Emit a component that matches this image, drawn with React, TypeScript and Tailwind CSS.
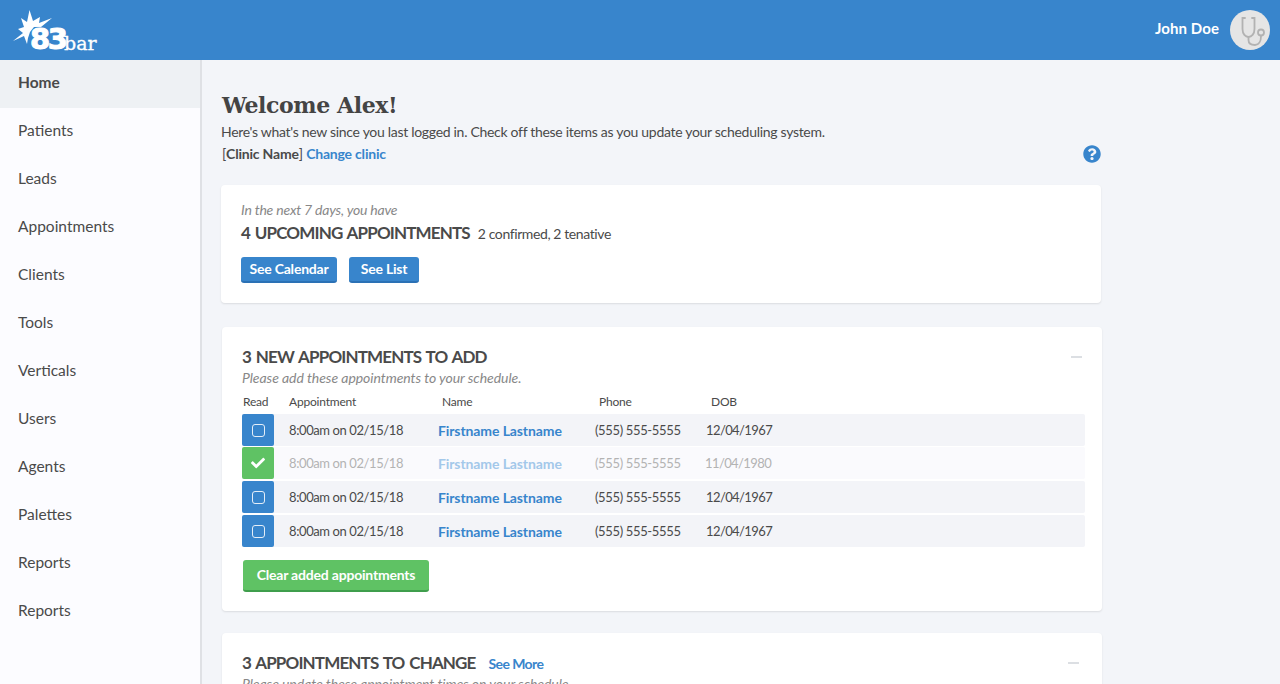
import { FaCheck, FaQuestionCircle } from "react-icons/fa";

const nav = ["Home", "Patients", "Leads", "Appointments", "Clients", "Tools", "Verticals", "Users", "Agents", "Palettes", "Reports", "Reports"];
const font = { fontFamily: "Lato, 'Noto Sans', sans-serif" };

function Row({ done, mt, dob }: { done?: boolean; mt: string; dob: string }) {
  return (
    <div className={`flex h-[32px] items-center rounded-[2px] text-[13px] ${mt} ${done ? "bg-[#fafafd] text-[#b3b3b3]" : "bg-[#f3f4f8] text-[#4a4a4a]"}`}>
      <div className={`flex h-full w-[32px] shrink-0 items-center justify-center rounded-[2px] ${done ? "bg-[#5fc264]" : "bg-[#3885cc]"}`}>
        {done ? <FaCheck className="text-[14px] text-white" /> : <div className="h-[13px] w-[13px] rounded-[3px] border-[1.5px] border-[#e4eef8]" />}
      </div>
      <div className="mt-[1px] w-[164px] shrink-0 pl-[15px] tracking-[-0.4px]">8:00am on 02/15/18</div>
      <div className={`w-[157px] shrink-0 text-[14px] font-bold tracking-[-0.1px] ${done ? "text-[#a3c8ea]" : "text-[#3885cc]"}`}>Firstname Lastname</div>
      <div className="mt-[1px] w-[111px] shrink-0 tracking-[-0.35px]">(555) 555-5555</div>
      <div className={`tracking-[-0.6px] ${done ? "ml-[-1px] mt-[2px]" : "mt-[2px]"}`}>{dob}</div>
    </div>
  );
}

export default function App() {
  return (
    <div className="flex h-[684px] w-[1280px] flex-col overflow-hidden bg-[#f3f5f9] text-[#4a4a4a]" style={font}>
      <header className="flex h-[60px] shrink-0 items-center justify-between bg-[#3885cc] pr-[10px]">
        <div className="relative h-[60px] w-[110px]">
          <svg className="absolute left-0 top-0" width="60" height="50" viewBox="0 0 60 50">
            <path fill="#fff" d="M29.5 10 L33 21 L40 17 L39 23 L52 18 L41 27 L34 27 L30 32 L28 38 L27 44 L24 36 L13 41 L23 33 L18 29 L24 27 L21 18 L27 22 Z" />
          </svg>
          <div className="absolute left-[30px] top-[21px] text-[29px] font-bold leading-[36px] tracking-[-2.5px] text-white [-webkit-text-stroke:1px_white] [font-family:'DejaVu_Sans',sans-serif] [text-shadow:0_0_2px_#3885cc]">83</div>
          <div className="absolute left-[64px] top-[31px] text-[19px] leading-[24px] text-white [-webkit-text-stroke:0.3px_white] [font-family:'DejaVu_Serif',serif]">bar</div>
        </div>
        <div className="flex items-center gap-[11px]">
          <span className="mb-[3px] text-[15px] font-bold tracking-[0.1px] text-white">John Doe</span>
          <div className="h-[40px] w-[40px] rounded-full bg-[#e5e5e5]">
            <svg width="40" height="40" viewBox="0 0 40 40" fill="none" stroke="#b2b2b2" strokeWidth="1.8" strokeLinecap="round">
              <path d="M15 8 H12.5 V19 C12.5 24 15.5 27 18.5 27 C21.5 27 24.5 24 24.5 19 V8 H22" />
              <path d="M18.5 27 V30 C18.5 33 21 35 25 35 C29 35 31 31 31 26" />
              <circle cx="31" cy="22.5" r="3" />
            </svg>
          </div>
        </div>
      </header>
      <div className="flex min-h-0 flex-1">
        <aside className="w-[202px] shrink-0 border-r-2 border-[#dfe1e5] bg-[#fcfcff]">
          {nav.map((n, i) => (
            <div key={i} className={`flex h-[48px] items-center pb-[2px] pl-[18px] text-[15.5px] ${i === 0 ? "bg-[#eef1f4] font-bold" : ""}`}>{n}</div>
          ))}
        </aside>
        <main className="w-[900px] pl-[19px] pt-[30px]">
          <h1 className="pl-[1px] text-[22px] font-bold leading-[30px] tracking-[-0.4px] text-[#444] [font-family:'DejaVu_Serif',serif]">Welcome Alex!</h1>
          <p className="mt-[2px] text-[14px] leading-[20px] tracking-[-0.3px]">Here's what's new since you last logged in. Check off these items as you update your scheduling system.</p>
          <div className="relative mt-[1px] flex h-[20px] w-[880px] items-center justify-between pl-[1px] text-[14px] tracking-[-0.2px]">
            <div>[<b>Clinic Name</b>] <b className="text-[#3885cc]">Change clinic</b></div>
            <FaQuestionCircle className="mt-[1px] text-[18px] text-[#3885cc]" />
          </div>

          <section className="mt-[22px] h-[118px] w-[880px] rounded-[4px] bg-white pl-[20px] pt-[16px] shadow-[0_1px_2px_rgba(0,0,0,0.1)]">
            <div className="text-[14px] italic leading-[18px] tracking-[-0.2px] text-[#888]">In the next 7 days, you have</div>
            <div className="mt-[2px] flex h-[24px] items-center">
              <span className="text-[17px] font-bold tracking-[-0.85px] [word-spacing:1.5px]">4 UPCOMING APPOINTMENTS</span>
              <span className="ml-[8px] text-[14px] tracking-[-0.4px]">2 confirmed, 2 tenative</span>
            </div>
            <div className="mt-[12px] flex gap-[12px]">
              <button className="h-[26px] w-[96px] rounded-[3px] border-b-2 border-[#2b71b5] bg-[#3885cc] pb-[1px] text-[14px] font-bold tracking-[-0.2px] text-white">See Calendar</button>
              <button className="h-[26px] w-[70px] rounded-[3px] border-b-2 border-[#2b71b5] bg-[#3885cc] pb-[1px] text-[14px] font-bold tracking-[-0.2px] text-white">See List</button>
            </div>
          </section>

          <section className="ml-[1px] mt-[24px] h-[284px] w-[880px] rounded-[4px] bg-white pl-[20px] pr-[17px] pt-[19px] shadow-[0_1px_2px_rgba(0,0,0,0.1)]">
            <div className="flex h-[22px] items-center justify-between pr-[3px]">
              <span className="text-[17px] font-bold tracking-[-0.85px] [word-spacing:1.5px]">3 NEW APPOINTMENTS TO ADD</span>
              <span className="h-[2px] w-[11px] bg-[#dcdfe3]" />
            </div>
            <div className="text-[14px] italic leading-[20px] tracking-[-0.05px] text-[#888]">Please add these appointments to your schedule.</div>
            <div className="mt-[5px] flex h-[18px] items-center text-[12px] tracking-[-0.2px]">
              <span className="w-[47px] pl-[1px]">Read</span>
              <span className="w-[153px]">Appointment</span>
              <span className="w-[157px]">Name</span>
              <span className="w-[112px]">Phone</span>
              <span>DOB</span>
            </div>
            <Row mt="mt-[3px]" dob="12/04/1967" />
            <Row done mt="mt-[1px]" dob="11/04/1980" />
            <Row mt="mt-[2px]" dob="12/04/1967" />
            <Row mt="mt-[2px]" dob="12/04/1967" />
            <button className="ml-[1px] mt-[13px] h-[32px] w-[186px] rounded-[3px] border-b-2 border-[#3f9e4c] bg-[#5fc264] pb-[1px] text-[14px] font-bold tracking-[-0.2px] text-white">Clear added appointments</button>
          </section>

          <section className="ml-[1px] mt-[22px] h-[120px] w-[880px] rounded-[4px] bg-white pl-[20px] pr-[23px] pt-[19px] shadow-[0_1px_2px_rgba(0,0,0,0.1)]">
            <div className="flex h-[22px] items-center justify-between">
              <div className="flex items-center">
                <span className="text-[17px] font-bold tracking-[-0.85px] [word-spacing:1.5px]">3 APPOINTMENTS TO CHANGE</span>
                <span className="ml-[13px] text-[14px] font-bold tracking-[-0.6px] text-[#3885cc]">See More</span>
              </div>
              <span className="h-[2px] w-[11px] bg-[#dcdfe3]" />
            </div>
            <div className="text-[14px] italic leading-[20px] tracking-[-0.05px] text-[#888]">Please update these appointment times on your schedule.</div>
          </section>
        </main>
      </div>
    </div>
  );
}
